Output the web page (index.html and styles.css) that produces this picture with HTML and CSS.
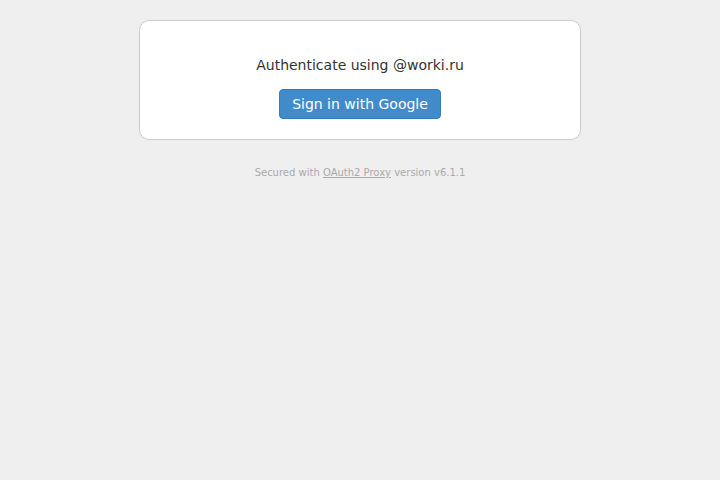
FILE: index.html
```html
<!DOCTYPE html>
<html lang="en">
<head>
<meta charset="utf-8">
<title>Sign In</title>
<link rel="stylesheet" href="styles.css">
</head>
<body>
<div class="signin center">
  <form method="GET" action="/oauth2/start">
    <input type="hidden" name="rd" value="/">
    <p>Authenticate using @worki.ru</p>
    <button type="submit" class="btn">Sign in with Google</button><br>
  </form>
</div>
<footer>
  Secured with <a href="#">OAuth2 Proxy</a> version v6.1.1
</footer>
</body>
</html>
```

FILE: styles.css
```css
body {
  margin: 0;
  padding: 20px 0 0;
  font-family: "DejaVu Sans", sans-serif;
  font-size: 14px;
  line-height: 1.42857143;
  color: #333;
  background: #efefef;
}
.signin {
  display: block;
  margin: 0 auto;
  max-width: 400px;
  background: #fff;
  border: 1px solid #ccc;
  border-radius: 10px;
  padding: 20px;
}
.center { text-align: center; }
.signin p { margin: 14px 0; }
.btn {
  color: #fff;
  background-color: #428bca;
  border: 1px solid #357ebd;
  border-radius: 4px;
  font-family: "DejaVu Sans", sans-serif;
  font-size: 14px;
  padding: 6px 12px;
  line-height: normal;
  cursor: pointer;
}
footer {
  display: block;
  font-size: 10px;
  text-align: center;
  color: #aaa;
  margin-top: 26px;
}
footer a { color: #aaa; }
```
